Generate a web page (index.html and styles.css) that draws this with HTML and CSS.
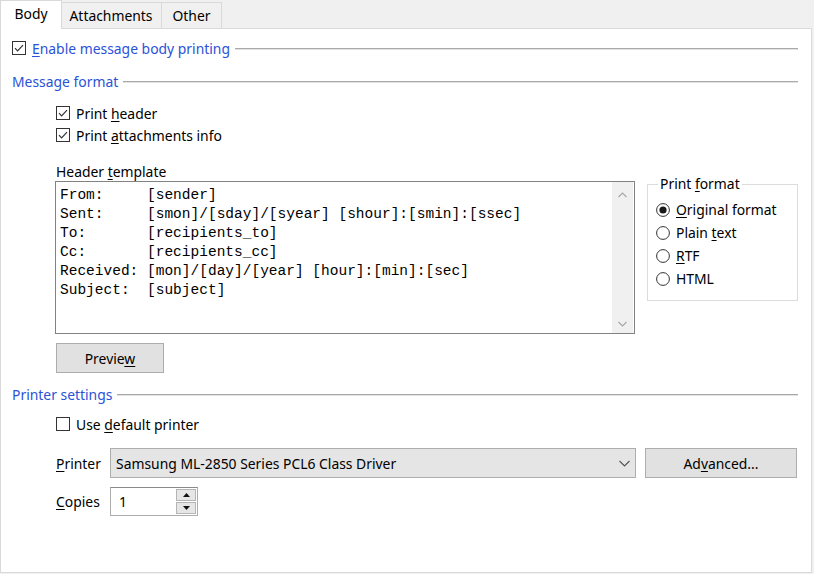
FILE: index.html
```html
<!DOCTYPE html>
<html>
<head>
<meta charset="utf-8">
<link rel="stylesheet" href="styles.css">
</head>
<body>
<div class="window">
  <div class="tabs">
    <div class="tab active">Body</div>
    <div class="tab t-attach">Attachments</div>
    <div class="tab t-other">Other</div>
  </div>
  <div class="panel">
    <div class="head head-enable">
      <svg class="box" width="14" height="14" viewBox="0 0 14 14"><rect x="0.5" y="0.5" width="13" height="13" fill="#fff" stroke="#333"/><path d="M3 7.2 L5.6 9.8 L11 4.2" fill="none" stroke="#333" stroke-width="1.2"/></svg>
      <span class="blue"><u>E</u>nable message body printing</span>
      <span class="rule"></span>
    </div>
    <div class="head head-format">
      <span class="blue">Message format</span>
      <span class="rule"></span>
    </div>
    <div class="indent">
      <div class="row row-header">
        <svg class="box" width="14" height="14" viewBox="0 0 14 14"><rect x="0.5" y="0.5" width="13" height="13" fill="#fff" stroke="#333"/><path d="M3 7.2 L5.6 9.8 L11 4.2" fill="none" stroke="#333" stroke-width="1.2"/></svg>
        <span>Print <u>h</u>eader</span>
      </div>
      <div class="row row-attach">
        <svg class="box" width="14" height="14" viewBox="0 0 14 14"><rect x="0.5" y="0.5" width="13" height="13" fill="#fff" stroke="#333"/><path d="M3 7.2 L5.6 9.8 L11 4.2" fill="none" stroke="#333" stroke-width="1.2"/></svg>
        <span>Print <u>a</u>ttachments info</span>
      </div>
      <div class="template-grid">
        <div class="template-col">
          <div class="row"><span>Header <u>t</u>emplate</span></div>
          <div class="memo">
            <div class="memo-text">
              <div class="ml">From:     [sender]</div>
              <div class="ml">Sent:     [smon]/[sday]/[syear] [shour]:[smin]:[ssec]</div>
              <div class="ml">To:       [recipients_to]</div>
              <div class="ml">Cc:       [recipients_cc]</div>
              <div class="ml">Received: [mon]/[day]/[year] [hour]:[min]:[sec]</div>
              <div class="ml">Subject:  [subject]</div>
            </div>
            <div class="vscroll">
              <svg width="9" height="6" viewBox="0 0 9 6"><path d="M0.5 5 L4.5 1 L8.5 5" fill="none" stroke="#a6a6a6" stroke-width="1.1"/></svg>
              <svg width="9" height="6" viewBox="0 0 9 6"><path d="M0.5 1 L4.5 5 L8.5 1" fill="none" stroke="#a6a6a6" stroke-width="1.1"/></svg>
            </div>
          </div>
          <div class="btn btn-preview"><span>Previe<u>w</u></span></div>
        </div>
        <div class="group">
          <div class="gtitle">Print <u>f</u>ormat</div>
          <div class="radio">
            <svg width="14" height="14" viewBox="0 0 14 14"><circle cx="7" cy="7" r="6.4" fill="#fff" stroke="#333"/><circle cx="7" cy="7" r="3.6" fill="#1a1a1a"/></svg>
            <span><u>O</u>riginal format</span>
          </div>
          <div class="radio">
            <svg width="14" height="14" viewBox="0 0 14 14"><circle cx="7" cy="7" r="6.4" fill="#fff" stroke="#333"/></svg>
            <span>Plain <u>t</u>ext</span>
          </div>
          <div class="radio">
            <svg width="14" height="14" viewBox="0 0 14 14"><circle cx="7" cy="7" r="6.4" fill="#fff" stroke="#333"/></svg>
            <span><u>R</u>TF</span>
          </div>
          <div class="radio">
            <svg width="14" height="14" viewBox="0 0 14 14"><circle cx="7" cy="7" r="6.4" fill="#fff" stroke="#333"/></svg>
            <span>HTML</span>
          </div>
        </div>
      </div>
    </div>
    <div class="head head-printer">
      <span class="blue">Printer settings</span>
      <span class="rule"></span>
    </div>
    <div class="indent">
      <div class="row row-default">
        <svg class="box" width="14" height="14" viewBox="0 0 14 14"><rect x="0.5" y="0.5" width="13" height="13" fill="#fff" stroke="#333"/></svg>
        <span>Use <u>d</u>efault printer</span>
      </div>
      <div class="field-row row-printer">
        <span class="flabel"><u>P</u>rinter</span>
        <div class="combo">
          <span>Samsung ML-2850 Series PCL6 Class Driver</span>
          <svg width="11" height="7" viewBox="0 0 11 7"><path d="M0.5 1 L5.5 6 L10.5 1" fill="none" stroke="#555" stroke-width="1.1"/></svg>
        </div>
        <div class="btn btn-adv"><span>Ad<u>v</u>anced...</span></div>
      </div>
      <div class="field-row row-copies">
        <span class="flabel"><u>C</u>opies</span>
        <div class="spin">
          <span class="spin-val">1</span>
          <div class="spin-btns">
            <div class="sbtn"><svg width="7" height="4" viewBox="0 0 7 4"><path d="M0 4 L3.5 0 L7 4 Z" fill="#111"/></svg></div>
            <div class="sbtn"><svg width="7" height="4" viewBox="0 0 7 4"><path d="M0 0 L3.5 4 L7 0 Z" fill="#111"/></svg></div>
          </div>
        </div>
      </div>
    </div>
  </div>
</div>
</body>
</html>
```
FILE: styles.css
```css
* { box-sizing: border-box; }
html, body { margin: 0; padding: 0; }
body {
  background: #f0f0f0;
  font-family: "Noto Sans", "Open Sans", sans-serif;
  font-size: 13.9px;
  color: #000;
  width: 814px;
  height: 574px;
  overflow: hidden;
}
u { text-decoration: underline; text-underline-offset: 2px; text-decoration-thickness: 1px; }
.window { width: 814px; }

.tabs {
  display: flex;
  align-items: flex-end;
  height: 28px;
}
.tab {
  height: 26px;
  border: 1px solid #d9d9d9;
  border-bottom: none;
  background: #f0f0f0;
  display: flex;
  align-items: center;
  justify-content: center;
  line-height: 18px;
  white-space: nowrap;
}
.tab.active {
  width: 62px;
  height: 29px;
  margin-bottom: -1px;
  background: #fff;
  position: relative;
  z-index: 1;
  padding-bottom: 2px;
}
.t-attach { width: 101px; margin-left: -1px; border-left: none; }
.t-other { width: 61px; margin-left: -1px; }

.panel {
  width: 812px;
  height: 545px;
  background: #fff;
  border: 1px solid #d9d9d9;
  padding: 10px 13px 0 11px;
}

.head {
  display: flex;
  align-items: center;
  height: 18px;
}
.blue { color: #2a52d8; white-space: nowrap; }
.rule {
  flex: 1;
  height: 2px;
  border-top: 1px solid #a9a9a9;
  border-bottom: 1px solid #e2e2e2;
  margin-left: 5px;
  margin-top: 2px;
}
.head-enable .box { margin-right: 6px; }
.head-format { margin-top: 15px; }
.head-printer { margin-top: 12px; }

.indent { padding-left: 44px; }
.row {
  display: flex;
  align-items: center;
  height: 18px;
  white-space: nowrap;
}
.row .box { margin-right: 6px; }
.row-header { margin-top: 14px; }
.row-attach { margin-top: 4px; }
.row-default { margin-top: 12px; }

.template-grid {
  display: grid;
  grid-template-columns: 579px 151px;
  column-gap: 12px;
  margin-top: 18px;
}
.memo {
  margin-top: 1px;
  margin-left: -1px;
  width: 580px;
  height: 153px;
  border: 1px solid #828282;
  display: flex;
  background: #fff;
}
.memo-text {
  flex: 1;
  padding: 4px 0 0 4px;
  font-family: "Liberation Mono", "DejaVu Sans Mono", monospace;
  font-size: 14.5px;
  line-height: 19px;
  color: #000;
}
.ml { white-space: pre; height: 19px; }
.vscroll {
  width: 21px;
  background: #f0f0f0;
  display: flex;
  flex-direction: column;
  justify-content: space-between;
  align-items: center;
  padding: 10px 0 6px;
  margin: 0 1px 0 0;
}

.btn {
  background: #e1e1e1;
  border: 1px solid #adadad;
  display: flex;
  align-items: center;
  justify-content: center;
  white-space: nowrap;
}
.btn-preview {
  width: 108px;
  height: 30px;
  margin-top: 9px;
}

.group {
  margin-top: 22px;
  height: 117px;
  border: 1px solid #dcdcdc;
  padding: 0 0 0 8px;
}
.gtitle {
  display: block;
  width: fit-content;
  margin: -10px 0 0 2px;
  padding: 0 2px;
  background: #fff;
  line-height: 18px;
  height: 18px;
  white-space: nowrap;
}
.radio {
  display: flex;
  align-items: center;
  height: 23px;
  white-space: nowrap;
}
.radio svg { margin-right: 6px; }
.gtitle + .radio { margin-top: 5px; }

.field-row {
  display: flex;
  align-items: center;
}
.flabel { width: 54px; white-space: nowrap; }
.row-printer { margin-top: 15px; height: 30px; }
.combo {
  width: 526px;
  height: 30px;
  background: #e5e5e5;
  border: 1px solid #adadad;
  display: flex;
  align-items: center;
  justify-content: space-between;
  padding: 0 5px 0 5px;
  white-space: nowrap;
}
.btn-adv {
  width: 152px;
  height: 30px;
  margin-left: 9px;
}
.row-copies { margin-top: 9px; height: 29px; }
.spin {
  width: 88px;
  height: 29px;
  border: 1px solid #adadad;
  border-top-color: #8a8a8a;
  display: flex;
  align-items: center;
  justify-content: space-between;
  padding: 0 1px 0 8px;
}
.spin-btns {
  display: flex;
  flex-direction: column;
  gap: 1px;
}
.sbtn {
  width: 20px;
  height: 12px;
  background: #e6e6e6;
  border: 1px solid #b5b5b5;
  display: flex;
  align-items: center;
  justify-content: center;
}
```
